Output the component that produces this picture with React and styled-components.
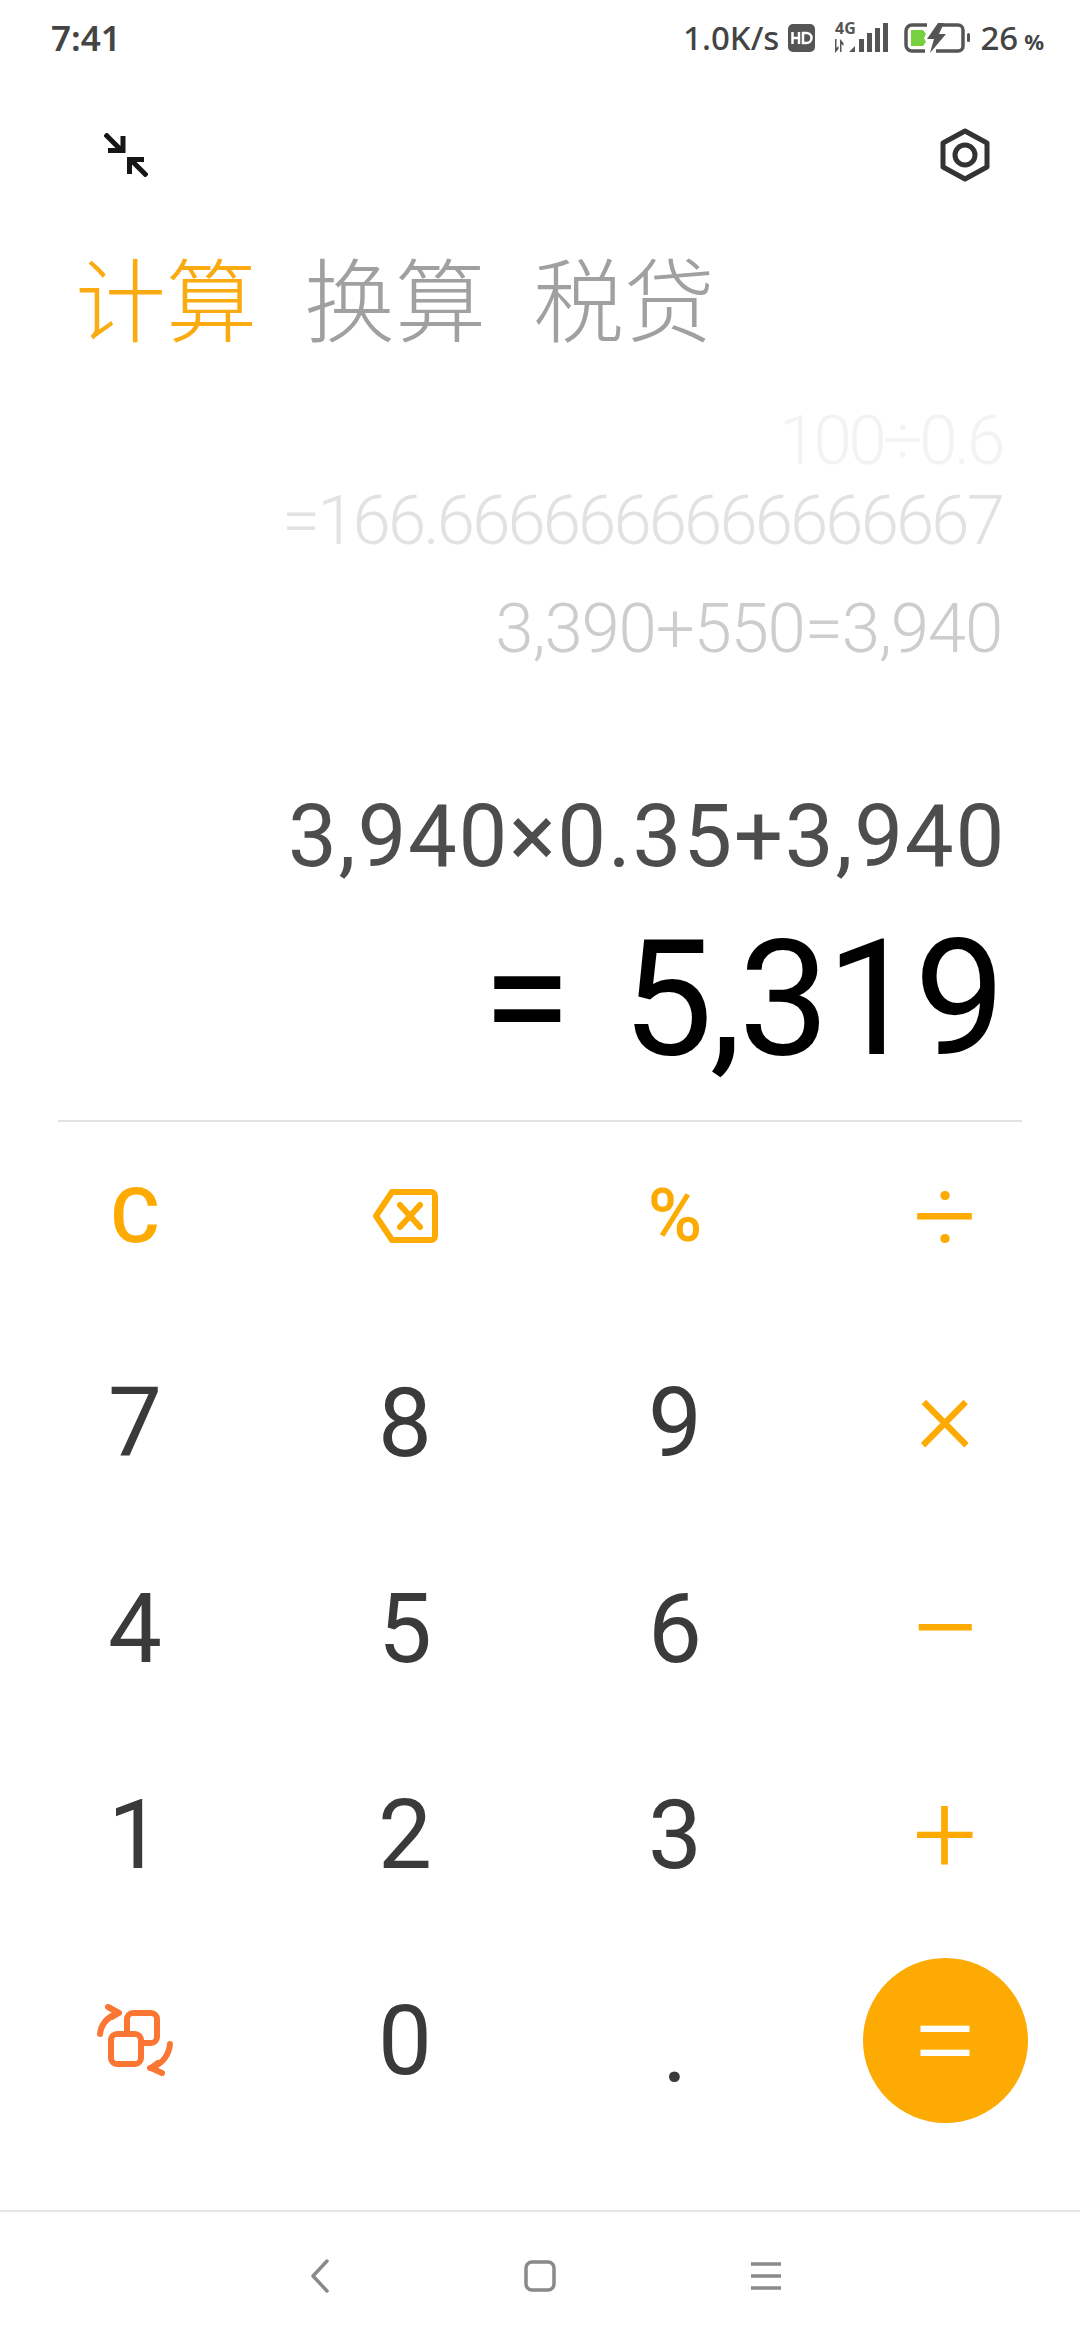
import React from 'react'
import styled, { createGlobalStyle } from 'styled-components'

const GlobalStyle = createGlobalStyle`
  html, body { margin: 0; padding: 0; background: #fff; }
  body { font-family: "Roboto", "Noto Sans CJK SC", sans-serif; }
`

const Page = styled.div`
  width: 1080px;
  height: 2340px;
  display: flex;
  flex-direction: column;
  background: #fff;
  overflow: hidden;
`

const StatusBar = styled.div`
  height: 75px;
  padding: 0 36px 0 51px;
  display: flex;
  align-items: center;
  justify-content: space-between;
  color: #444;
  font-family: "Noto Sans", sans-serif;
`

const Clock = styled.span`
  font-size: 35px;
  font-weight: 600;
`

const StatusRight = styled.div`
  display: flex;
  align-items: center;
  font-size: 33px;
`

const Speed = styled.span`
  font-weight: 500;
  margin-right: 9px;
`

const SignalWrap = styled.span`
  display: flex;
  margin: 0 16px 0 17px;
`

const Percent = styled.span`
  font-weight: 500;
  margin-left: 10px;
  small { font-size: 22px; font-weight: 700; margin-left: 6px; }
`

const Toolbar = styled.div`
  height: 160px;
  padding: 0 90px 0 104px;
  display: flex;
  align-items: center;
  justify-content: space-between;
`

const Tabs = styled.div`
  display: flex;
  gap: 47px;
  padding-left: 75px;
  height: 120px;
  align-items: center;
`

const Tab = styled.span`
  font-family: "Noto Sans CJK SC", sans-serif;
  font-size: 91px;
  font-weight: 300;
  line-height: 1;
  color: ${p => (p.$active ? '#fbab12' : '#a0a0a0')};
`

const Display = styled.div`
  height: 767px;
  margin: 0 58px;
  padding: 46px 20px 0 0;
  box-sizing: border-box;
  border-bottom: 2px solid #e2e2e2;
  display: flex;
  flex-direction: column;
  align-items: flex-end;
`

const HistoryLine = styled.div`
  font-size: 69px;
  font-weight: 300;
  letter-spacing: ${p => p.$spacing}px;
  line-height: ${p => p.$h}px;
  height: ${p => p.$h}px;
  color: ${p => p.$color};
  white-space: nowrap;
`

const Expression = styled.div`
  margin: 89px -4px 0 0;
  font-weight: 400;
  font-size: 87px;
  letter-spacing: 1.700px;
  line-height: 100px;
  color: #4d4d4d;
`

const Result = styled.div`
  margin-top: 28px;
  font-size: 162px;
  line-height: 170px;
  letter-spacing: -3.200px;
  word-spacing: -10px;
  font-weight: 400;
  color: #000;
  white-space: pre;
`

const Keypad = styled.div`
  display: grid;
  grid-template-columns: repeat(4, 270px);
  grid-auto-rows: 206px;
  margin-top: -9px;
  height: 1097px;
`

const Key = styled.div`
  display: flex;
  align-items: center;
  justify-content: center;
  box-sizing: border-box;
  padding: ${p => p.$pad || '0'};
  font-size: ${p => p.$size || 96}px;
  font-weight: ${p => p.$weight || 400};
  line-height: 1;
  color: ${p => (p.$op ? '#fdab03' : '#3a3a3a')};
`

const EqualsButton = styled.div`
  width: 165px;
  height: 165px;
  border-radius: 50%;
  background: #fdab03;
  color: #fff;
  font-size: 120px;
  font-weight: 300;
  display: flex;
  align-items: center;
  justify-content: center;
`

const NavBar = styled.div`
  flex: 1;
  border-top: 2px solid #e6e6e6;
  padding-left: 11px;
  display: flex;
  align-items: center;
  justify-content: center;
  gap: 195px;
`

const CollapseIcon = () => (
  <svg width="44" height="44" viewBox="0 0 44 44" fill="none" stroke="#161616" strokeWidth="5">
    <path d="M1 1l16 16M4 17.500h15V3" />
    <path d="M43 43L27 27M40 26.500H25.500V41" />
  </svg>
)

const SettingsIcon = () => (
  <svg width="50" height="54" viewBox="0 0 50 54" fill="none" stroke="#333" strokeWidth="5" strokeLinejoin="round">
    <path d="M25 3l22 12v24L25 51 3 39V15z" />
    <circle cx="25" cy="27" r="10" />
  </svg>
)

const HdIcon = () => (
  <svg width="27" height="28" viewBox="0 0 27 28">
    <rect width="27" height="28" rx="5" fill="#555" />
    <path d="M4.500 8v12M11 8v12M4.500 14h6.500M15 9v10h3.500a5 5 0 0 0 0-10z" fill="none" stroke="#fff" strokeWidth="2.500" />
  </svg>
)

const SignalIcon = () => (
  <svg width="56" height="30" viewBox="0 0 56 30" fill="#555" overflow="visible">
    <text x="3" y="11" fontSize="16" fontWeight="700" fontFamily="Noto Sans">4G</text>
    <path d="M3 16h1.500v9l2-2v3L3 30zM8 16l3.500 4v3L9.500 21v8H8z" />
    <path d="M17 29l6-6v6zM27 16h5v13h-5zM35 10h5v19h-5zM43 5h5v24h-5zM51 0h5v29h-5z" />
  </svg>
)

const BatteryIcon = () => (
  <svg width="66" height="30" viewBox="0 0 66 30" fill="none">
    <path d="M23 2H8a6 6 0 0 0-6 6v14a6 6 0 0 0 6 6h13M38 2h16a5 5 0 0 1 5 5v16a5 5 0 0 1-5 5H32" stroke="#555" strokeWidth="3.500" />
    <path d="M7 7h12l3 4-2 4 2 4-3 4H7z" fill="#77d13f" />
    <path d="M34 0h6l-5 11h7L26 30l4-14h-7z" fill="#555" />
    <rect x="63" y="10" width="3" height="9" rx="1.500" fill="#555" />
  </svg>
)

const BackspaceIcon = () => (
  <svg width="66" height="54" viewBox="0 0 66 54" fill="none" stroke="#fdab03" strokeWidth="6" strokeLinecap="round" strokeLinejoin="round">
    <path d="M20 3h39a4 4 0 0 1 4 4v40a4 4 0 0 1-4 4H20L4 27z" />
    <path d="M28 16l20 22M48 16L28 38" />
  </svg>
)

const SwitchIcon = () => (
  <svg width="76" height="72" viewBox="0 0 76 72" fill="none" stroke="#fb7533" strokeWidth="6" strokeLinecap="round" strokeLinejoin="round">
    <rect x="30" y="9" width="30" height="30" rx="6" />
    <rect x="14" y="30" width="30" height="30" rx="6" fill="#fff" />
    <path d="M3 30C4 20 11 12 22 9M11 3l11 6-7 4" />
    <path d="M73 40c-1 11-8 21-20 24M65 69l-11-5 7-5" />
  </svg>
)

const BackIcon = () => (
  <svg width="18" height="34" viewBox="0 0 18 34" fill="none" stroke="#8a8a8a" strokeWidth="3.500" strokeLinecap="round" strokeLinejoin="round">
    <path d="M16 2L2 17l14 15" />
  </svg>
)

const HomeIcon = () => (
  <svg width="32" height="32" viewBox="0 0 32 32" fill="none" stroke="#8a8a8a" strokeWidth="3.500">
    <rect x="2" y="2" width="28" height="28" rx="6" />
  </svg>
)

const MenuIcon = () => (
  <svg width="30" height="28" viewBox="0 0 30 28" fill="none" stroke="#8a8a8a" strokeWidth="3.500">
    <path d="M0 2h30M0 14h30M0 26h30" />
  </svg>
)

const digitPad = '2px 0 0'

const keys = [
  { label: 'C', op: true, size: 76, weight: 500 },
  { label: <BackspaceIcon /> },
  { label: '%', op: true, size: 74, weight: 500 },
  { label: '÷', op: true, size: 112, weight: 300 },
  { label: '7', pad: digitPad },
  { label: '8', pad: digitPad },
  { label: '9', pad: digitPad },
  { label: '×', op: true, size: 112, weight: 300, pad: '0 0 15px' },
  { label: '4', pad: digitPad },
  { label: '5', pad: digitPad },
  { label: '6', pad: digitPad },
  { label: '−', op: true, size: 130, weight: 300, pad: '4px 0 0' },
  { label: '1', pad: digitPad },
  { label: '2', pad: digitPad },
  { label: '3', pad: digitPad },
  { label: '+', op: true, size: 114, weight: 300 },
  { label: <SwitchIcon /> },
  { label: '0', pad: digitPad },
  { label: '.', pad: '16px 0 0' },
  { label: <EqualsButton>=</EqualsButton> },
]

const App = () => (
  <Page>
    <GlobalStyle />
    <StatusBar>
      <Clock>7:41</Clock>
      <StatusRight>
        <Speed>1.0K/s</Speed>
        <HdIcon />
        <SignalWrap><SignalIcon /></SignalWrap>
        <BatteryIcon />
        <Percent>26<small>%</small></Percent>
      </StatusRight>
    </StatusBar>
    <Toolbar>
      <CollapseIcon />
      <SettingsIcon />
    </Toolbar>
    <Tabs>
      <Tab $active>计算</Tab>
      <Tab>换算</Tab>
      <Tab>税贷</Tab>
    </Tabs>
    <Display>
      <HistoryLine $h={80} $spacing={-3.4} $color="#f3f3f3">100÷0.6</HistoryLine>
      <HistoryLine $h={80} $spacing={-2.95} $color="#e2e2e2">=166.6666666666666667</HistoryLine>
      <HistoryLine $h={136} $spacing={-1.2} $color="#cdcdcd">3,390+550=3,940</HistoryLine>
      <Expression>3,940×0.35+3,940</Expression>
      <Result>=  5,319</Result>
    </Display>
    <Keypad>
      {keys.map((k, i) => (
        <Key key={i} $op={k.op} $size={k.size} $weight={k.weight} $pad={k.pad}>{k.label}</Key>
      ))}
    </Keypad>
    <NavBar>
      <BackIcon />
      <HomeIcon />
      <MenuIcon />
    </NavBar>
  </Page>
)

export default App
